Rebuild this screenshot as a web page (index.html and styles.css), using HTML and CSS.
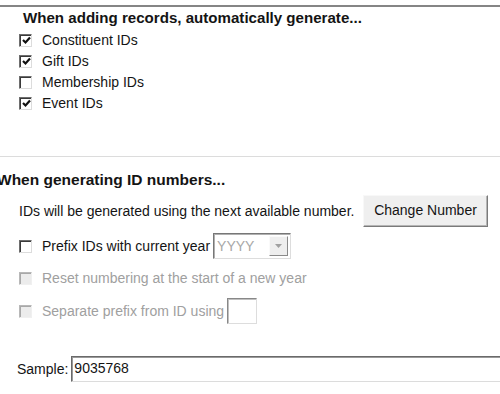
FILE: index.html
```html
<!DOCTYPE html>
<html>
<head>
<meta charset="utf-8">
<link rel="stylesheet" href="styles.css">
</head>
<body>
<div class="page">
  <div class="topline"></div>
  <section class="sec1">
    <div class="heading h1">When adding records, automatically generate...</div>
    <div class="checks">
      <label class="row"><span class="cb checked"><svg viewBox="0 0 9 9" width="9" height="9"><path d="M1 4 L3.5 6.5 L8 1.5" fill="none" stroke="#111" stroke-width="2.2"/></svg></span><span>Constituent IDs</span></label>
      <label class="row"><span class="cb checked"><svg viewBox="0 0 9 9" width="9" height="9"><path d="M1 4 L3.5 6.5 L8 1.5" fill="none" stroke="#111" stroke-width="2.2"/></svg></span><span>Gift IDs</span></label>
      <label class="row"><span class="cb"></span><span>Membership IDs</span></label>
      <label class="row"><span class="cb checked"><svg viewBox="0 0 9 9" width="9" height="9"><path d="M1 4 L3.5 6.5 L8 1.5" fill="none" stroke="#111" stroke-width="2.2"/></svg></span><span>Event IDs</span></label>
    </div>
  </section>
  <div class="divider"></div>
  <section class="sec2">
    <div class="heading h2">When generating ID numbers...</div>
    <div class="genrow">
      <span class="gentext">IDs will be generated using the next available number.</span>
      <button class="btn">Change Number</button>
    </div>
    <div class="row opt">
      <span class="cb"></span><span>Prefix IDs with current year</span>
      <span class="combo"><span class="combo-text">YYYY</span><span class="combo-btn"><svg viewBox="0 0 7 4" width="7" height="4"><path d="M0 0 H7 L3.5 4 Z" fill="#a0a0a0"/></svg></span></span>
    </div>
    <div class="row opt disabled r3">
      <span class="cb"></span><span>Reset numbering at the start of a new year</span>
    </div>
    <div class="row opt disabled r4">
      <span class="cb"></span><span>Separate prefix from ID using</span>
      <span class="smallbox"></span>
    </div>
    <div class="sample">
      <span>Sample:</span>
      <span class="samplebox">9035768</span>
    </div>
  </section>
</div>
</body>
</html>
```

FILE: styles.css
```css
html, body {
  margin: 0;
  padding: 0;
  background: #fff;
}
.page {
  width: 500px;
  height: 394px;
  overflow: hidden;
  font-family: "Liberation Sans", Arial, sans-serif;
  font-size: 14px;
  color: #141414;
}
.topline {
  margin-top: 5px;
  height: 2px;
  background: #858585;
}
.heading {
  font-weight: bold;
  line-height: 16px;
}
.h1 {
  font-size: 15.1px;
  margin-top: 3px;
  padding-left: 23px;
}
.checks {
  padding-left: 19px;
  margin-top: 6px;
  display: flex;
  flex-direction: column;
  gap: 5px;
}
.row {
  display: flex;
  align-items: center;
  height: 16px;
}
.cb {
  box-sizing: border-box;
  width: 13px;
  height: 13px;
  border: 1px solid;
  border-color: #6e6e6e #dcdcdc #dcdcdc #6e6e6e;
  box-shadow: inset 1px 1px 0 #3a3a3a;
  background: #fff;
  margin-right: 10px;
  display: flex;
  align-items: center;
  justify-content: center;
  flex: none;
}
.cb svg { display: block; margin: 1px 0 0 1px; }
.divider {
  margin-top: 45px;
  height: 1px;
  background: #dcdcdc;
}
.h2 {
  font-size: 15.5px;
  margin-top: 15px;
  margin-left: -3px;
}
.genrow {
  display: flex;
  align-items: center;
  padding-left: 19px;
  margin-top: 7px;
}
.gentext { width: 344px; }
.btn {
  box-sizing: border-box;
  width: 125px;
  height: 32px;
  font: inherit;
  color: #141414;
  background: #efefef;
  border: 1px solid;
  border-color: #f8f8f8 #7a7a7a #7a7a7a #f8f8f8;
  box-shadow: inset -1px -1px 0 #b5b5b5;
  padding: 0 0 2px 0;
}
.opt {
  padding-left: 19px;
  margin-top: 5px;
  height: 28px;
}
.combo {
  box-sizing: border-box;
  display: flex;
  width: 78px;
  height: 26px;
  margin-left: 3px;
  border: 1px solid;
  border-color: #777 #ddd #ddd #777;
  box-shadow: inset 1px 1px 0 #b0b0b0;
}
.combo-text {
  flex: 1;
  color: #a8a8a8;
  padding: 4px 0 0 3px;
  font-size: 14px;
}
.combo-btn {
  width: 19px;
  margin: 2px 2px 2px 0;
  background: #eee;
  border: 1px solid;
  border-color: #fafafa #8a8a8a #8a8a8a #fafafa;
  display: flex;
  align-items: center;
  justify-content: center;
  box-sizing: border-box;
}
.disabled { color: #a0a0a0; }
.disabled .cb {
  background: #ececec;
  border-color: #b8b8b8 #f0f0f0 #f0f0f0 #b8b8b8;
  box-shadow: inset 1px 1px 0 #a8a8a8;
}
.r3 { margin-top: 4px; }
.r4 { margin-top: 5px; }
.smallbox {
  box-sizing: border-box;
  width: 30px;
  height: 26px;
  margin-left: 3px;
  border: 1px solid;
  border-color: #888 #ddd #ddd #888;
  box-shadow: inset 1px 1px 0 #c0c0c0;
}
.sample {
  display: flex;
  align-items: center;
  padding-left: 17px;
  margin-top: 31px;
}
.samplebox {
  box-sizing: border-box;
  flex: 1;
  height: 26px;
  margin-left: 3px;
  border: 1px solid;
  border-right: none;
  border-color: #6a6a6a #dcdcdc #dcdcdc #6a6a6a;
  box-shadow: inset 1px 1px 0 #9a9a9a;
  padding: 3px 0 0 2px;
}
```
